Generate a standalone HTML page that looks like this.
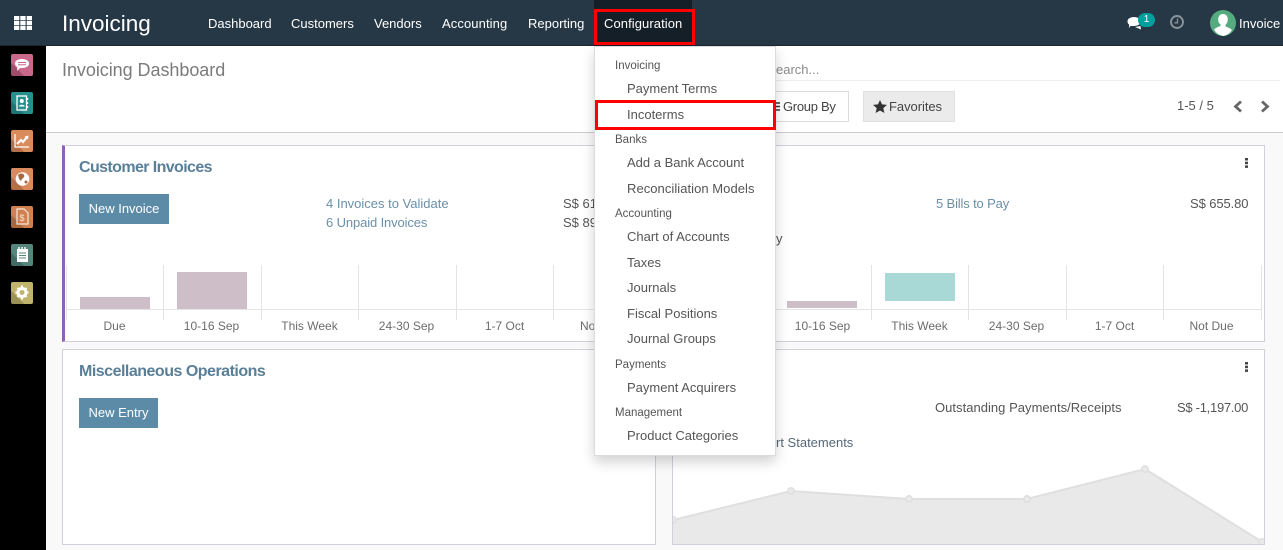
<!DOCTYPE html>
<html><head><meta charset="utf-8">
<style>
html,body{margin:0;padding:0}
body{width:1283px;height:550px;overflow:hidden;position:relative;background:#f9f9f9;font-family:"Liberation Sans",sans-serif;font-size:13px;color:#4c4c4c}
div,span.t{position:absolute;white-space:nowrap;box-sizing:border-box}
.t{line-height:16px}
.nav{color:#fff;top:16px;font-size:13px}
.card{background:#fff;border:1px solid #d1d1dc}
.hd{left:615px;font-size:11.5px;color:#555}
.it{left:627px;font-size:13px;color:#555}
.ax{top:318px;font-size:12px;color:#6c6c6c;text-align:center;width:97px}
.l{background:#e4e4e6}
.ic{left:11px;width:22px;height:22px;border-radius:2px}
a{color:inherit}
</style></head><body>

<!-- top bar -->
<div style="left:0;top:0;width:1283px;height:46px;background:#263846;border-bottom:1px solid #1a2730"></div>
<svg style="position:absolute;left:14px;top:16px" width="18" height="14"><g fill="#fff"><rect x="0" y="0" width="5.300" height="4.200"/><rect x="6.300" y="0" width="5.300" height="4.200"/><rect x="12.700" y="0" width="5.300" height="4.200"/><rect x="0" y="4.900" width="5.300" height="4.200"/><rect x="6.300" y="4.900" width="5.300" height="4.200"/><rect x="12.700" y="4.900" width="5.300" height="4.200"/><rect x="0" y="9.800" width="5.300" height="4.200"/><rect x="6.300" y="9.800" width="5.300" height="4.200"/><rect x="12.700" y="9.800" width="5.300" height="4.200"/></g></svg>
<div class="t" style="left:62px;top:10px;font-size:22.500px;line-height:28px;color:#fff">Invoicing</div>
<div class="t nav" style="left:208px">Dashboard</div>
<div class="t nav" style="left:291px">Customers</div>
<div class="t nav" style="left:374px">Vendors</div>
<div class="t nav" style="left:442px;letter-spacing:.1px">Accounting</div>
<div class="t nav" style="left:528px">Reporting</div>
<div style="left:594px;top:0;width:98px;height:46px;background:#151f27"></div>
<div class="t nav" style="left:604px;letter-spacing:.08px">Configuration</div>
<div style="left:594px;top:9px;width:101px;height:36px;border:3px solid #f00"></div>

<svg style="position:absolute;left:1127px;top:16px" width="16" height="14"><path d="M0.500 5.500C0.500 2.800 3.200 1 7 1s6.500 1.800 6.500 4.500S10.800 10 7 10L3.500 10 1.800 12 2.300 8.900C1.200 8 .5 6.900 .5 5.500z" fill="#fff"/><path d="M8 11l6 2.500-.5-3.500z" fill="#fff"/></svg>
<div style="left:1138px;top:13px;width:17px;height:14px;border-radius:8px;background:#00a09d;color:#fff;font-size:10px;line-height:13px;text-align:center">1</div>
<svg style="position:absolute;left:1170px;top:15px" width="14" height="14"><circle cx="7" cy="7" r="6" fill="none" stroke="#8b949b" stroke-width="1.900"/><path d="M7.500 3.500V7.800H4.500" fill="none" stroke="#8b949b" stroke-width="1.300"/></svg>
<svg style="position:absolute;left:1210px;top:10px" width="26" height="26"><circle cx="13" cy="13" r="13" fill="#55ab7f"/><path d="M13 4c3 0 4.800 2.300 4.800 5.500 0 2.300-1 4.300-2.300 5.300v1.700c2.500 1 5 1.800 6.500 3.500A13 13 0 0 1 13 26a13 13 0 0 1-9-6.500c1.500-1.700 4-2.500 6.500-3.500v-1.700C9.200 13.800 8.200 11.800 8.200 9.500 8.200 6.300 10 4 13 4z" fill="#fff"/></svg>
<div class="t" style="left:1239px;top:16px;color:#fff;font-size:13px">Invoice</div>

<!-- sidebar -->
<div style="left:0;top:46px;width:46px;height:504px;background:#000"></div>
<div class="ic" style="top:54px;background:linear-gradient(45deg,#a14c6a 0,#a14c6a 30%,#c9688a 30%)"></div>
<svg style="position:absolute;left:14px;top:58px" width="16" height="14"><path d="M1 5.500C1 2.800 4 1 8 1s7 1.800 7 4.500S12 10 8 10H6L3 13l.5-3.800C2 8.400 1 7 1 5.500z" fill="#fff"/><path d="M4 4.500h8M4 6.800h8" stroke="#c9688a"/></svg>
<div class="ic" style="top:92px;background:linear-gradient(45deg,#1d7574 0,#1d7574 30%,#26908f 30%)"></div>
<svg style="position:absolute;left:16px;top:95px" width="13" height="16"><rect x="1" y="1" width="9.500" height="14" fill="none" stroke="#fff" stroke-width="1.300"/><path d="M11.500 3v2M11.500 7v2M11.500 11v2" stroke="#fff" stroke-width="1.300"/><circle cx="5.800" cy="6" r="2" fill="#fff"/><path d="M3 11.500c0-2.300 5.600-2.300 5.600 0z" fill="#fff"/></svg>
<div class="ic" style="top:130px;background:linear-gradient(45deg,#b56f44 0,#b56f44 30%,#d98b5c 30%)"></div>
<svg style="position:absolute;left:14px;top:133px" width="16" height="16"><path d="M1 1v13h14" fill="none" stroke="#fff" stroke-width="1.200"/><path d="M3 11l4-4 2 2 4-5" fill="none" stroke="#fff" stroke-width="2.200"/><path d="M10.500 3.500L14.500 2.500 14 6.500z" fill="#fff"/></svg>
<div class="ic" style="top:168px;background:linear-gradient(45deg,#b56f44 0,#b56f44 30%,#d98b5c 30%)"></div>
<svg style="position:absolute;left:15px;top:171px" width="15" height="16"><circle cx="7.500" cy="8" r="6.800" fill="#fff"/><path d="M3 4c2-2 5-2 6 0s-1 3-2 4l-1 2-2-2z" fill="#a9683f"/><circle cx="11" cy="11" r="1.500" fill="#a9683f"/></svg>
<div class="ic" style="top:206px;background:linear-gradient(45deg,#aa673c 0,#aa673c 30%,#d0804f 30%)"></div>
<svg style="position:absolute;left:16px;top:208px" width="13" height="17"><path d="M1 1h7l4 4v11H1z" fill="none" stroke="#f3e6dc" stroke-width="1.200"/><text x="3.500" y="13" font-size="9" fill="#f3e6dc" font-family="Liberation Sans">$</text></svg>
<div class="ic" style="top:244px;background:linear-gradient(45deg,#426c63 0,#426c63 30%,#54867b 30%)"></div>
<svg style="position:absolute;left:16px;top:246px" width="13" height="17"><path d="M1 3h11v13H1z" fill="#fff"/><path d="M3 1v3M6 1v3M9 1v3" stroke="#fff" stroke-width="1.400"/><path d="M3 7h7M3 9.500h7M3 12h7" stroke="#54867b"/></svg>
<div class="ic" style="top:282px;background:linear-gradient(45deg,#9c9155 0,#9c9155 30%,#c0b46c 30%)"></div>
<svg style="position:absolute;left:15px;top:285px" width="14" height="15"><circle cx="7" cy="7.500" r="4" fill="none" stroke="#fff" stroke-width="3"/><path d="M7 .5v3M7 11.500v3M.5 7.500h3M10.500 7.500h3M2.400 2.900l2 2M9.600 10.100l2 2M11.600 2.900l-2 2M4.400 10.100l-2 2" stroke="#fff" stroke-width="2"/></svg>

<!-- control panel -->
<div style="left:46px;top:46px;width:1237px;height:87px;background:#fff;border-bottom:1px solid #ccc"></div>
<div class="t" style="left:62px;top:59px;font-size:18px;line-height:22px;color:#7c7b7b;letter-spacing:-.05px">Invoicing Dashboard</div>
<div style="left:770px;top:80px;width:510px;height:1px;background:#ececec"></div>
<div class="t" style="left:776px;top:62px;font-size:13px;color:#8a8a8a">earch...</div>
<div style="left:740px;top:91px;width:109px;height:31px;background:#fff;border:1px solid #dcdcdc"></div>
<svg style="position:absolute;left:774px;top:102px" width="6" height="9"><path d="M0 1h6M0 4.500h6M0 8h6" stroke="#333" stroke-width="1.500"/></svg>
<div class="t" style="left:783px;top:99px;font-size:13px;color:#444;letter-spacing:-.3px">Group By</div>
<div style="left:863px;top:91px;width:92px;height:31px;background:#ebebeb;border:1px solid #e0e0e0"></div>
<svg style="position:absolute;left:873px;top:100px" width="14" height="13"><path d="M7 0l2 4.400 5 .5-3.700 3.200 1.100 4.900L7 10.500 2.600 13l1.100-4.900L0 4.900l5-.5z" fill="#333"/></svg>
<div class="t" style="left:889px;top:99px;font-size:13px;color:#444;letter-spacing:-.05px">Favorites</div>
<div class="t" style="left:1177px;top:98px;font-size:13px;color:#555">1-5 / 5</div>
<svg style="position:absolute;left:1232px;top:100px" width="40" height="13"><path d="M9 1.500L3.500 6.500 9 11.500" fill="none" stroke="#666" stroke-width="2.800"/><path d="M30 1.500L35.500 6.500 30 11.500" fill="none" stroke="#666" stroke-width="2.800"/></svg>

<!-- card: customer invoices -->
<div class="card" style="left:62px;top:145px;width:594px;height:197px;border-left:3px solid #8f62b8"></div>
<div class="t" style="left:79px;top:158px;font-size:16px;line-height:20px;font-weight:bold;color:#5a7f97;letter-spacing:-.6px">Customer Invoices</div>
<div style="left:79px;top:194px;width:90px;height:30px;background:#5c8ba8;color:#fff;font-size:13px;line-height:29px;text-align:center">New Invoice</div>
<div class="t" style="left:326px;top:196px;color:#6a8fa8">4 Invoices to Validate</div>
<div class="t" style="left:326px;top:215px;color:#6a8fa8;letter-spacing:-.12px">6 Unpaid Invoices</div>
<div class="t" style="left:563px;top:196px;color:#555">S$ 61</div>
<div class="t" style="left:563px;top:215px;color:#555">S$ 89</div>
<div class="l" style="left:66px;top:309px;width:530px;height:1px"></div>
<div class="l" style="left:66px;top:265px;width:1px;height:55px"></div>
<div class="l" style="left:163px;top:265px;width:1px;height:55px"></div>
<div class="l" style="left:261px;top:265px;width:1px;height:55px"></div>
<div class="l" style="left:358px;top:265px;width:1px;height:55px"></div>
<div class="l" style="left:456px;top:265px;width:1px;height:55px"></div>
<div class="l" style="left:553px;top:265px;width:1px;height:55px"></div>
<div style="left:80px;top:297px;width:70px;height:12px;background:#cdbec8"></div>
<div style="left:177px;top:272px;width:70px;height:37px;background:#cdbec8"></div>
<div class="t ax" style="left:66px">Due</div>
<div class="t ax" style="left:163px">10-16 Sep</div>
<div class="t ax" style="left:261px">This Week</div>
<div class="t ax" style="left:358px">24-30 Sep</div>
<div class="t ax" style="left:456px">1-7 Oct</div>
<div class="t" style="left:580px;top:318px;font-size:12px;color:#6c6c6c">No</div>

<!-- card: vendor bills -->
<div class="card" style="left:672px;top:145px;width:593px;height:197px"></div>
<svg style="position:absolute;left:1245px;top:158px" width="3" height="10"><rect width="3" height="2.500" y="0" fill="#444"/><rect width="3" height="2.500" y="3.700" fill="#444"/><rect width="3" height="2.500" y="7.400" fill="#444"/></svg>
<div class="t" style="left:936px;top:196px;color:#6a8fa8;letter-spacing:-.15px">5 Bills to Pay</div>
<div class="t" style="left:1190px;top:196px;color:#555;letter-spacing:-.1px">S$ 655.80</div>
<div class="t" style="left:776px;top:231px;color:#555">y</div>
<div class="l" style="left:676px;top:309px;width:585px;height:1px"></div>
<div class="l" style="left:871px;top:265px;width:1px;height:55px"></div>
<div class="l" style="left:968px;top:265px;width:1px;height:55px"></div>
<div class="l" style="left:1066px;top:265px;width:1px;height:55px"></div>
<div class="l" style="left:1163px;top:265px;width:1px;height:55px"></div>
<div class="l" style="left:1261px;top:265px;width:1px;height:55px"></div>
<div style="left:787px;top:301px;width:70px;height:7px;background:#cdbec8"></div>
<div style="left:885px;top:273px;width:70px;height:28px;background:#a8d9d6"></div>
<div class="t ax" style="left:774px">10-16 Sep</div>
<div class="t ax" style="left:871px">This Week</div>
<div class="t ax" style="left:968px">24-30 Sep</div>
<div class="t ax" style="left:1066px">1-7 Oct</div>
<div class="t ax" style="left:1163px">Not Due</div>

<!-- card: misc -->
<div class="card" style="left:62px;top:349px;width:594px;height:196px"></div>
<div class="t" style="left:79px;top:362px;font-size:16px;line-height:20px;font-weight:bold;color:#5a7f97;letter-spacing:-.5px">Miscellaneous Operations</div>
<div style="left:79px;top:398px;width:79px;height:30px;background:#5c8ba8;color:#fff;font-size:13px;line-height:29px;text-align:center">New Entry</div>

<!-- card: bank -->
<div class="card" style="left:672px;top:349px;width:593px;height:196px;overflow:hidden">
<svg style="position:absolute;left:-1px;top:-1px" width="593" height="196"><path d="M1 171L119 142 237 150 355 150 473 120 592 194V195H1z" fill="#e9e9e9"/><path d="M1 171L119 142 237 150 355 150 473 120 592 194" fill="none" stroke="#dfdfdf" stroke-width="2"/><g fill="#e9e9e9" stroke="#dfdfdf" stroke-width="1.500"><circle cx="1" cy="171" r="3.200"/><circle cx="119" cy="142" r="3.200"/><circle cx="237" cy="150" r="3.200"/><circle cx="355" cy="150" r="3.200"/><circle cx="473" cy="120" r="3.200"/><circle cx="590" cy="193" r="3.200"/></g></svg>
</div>
<svg style="position:absolute;left:1245px;top:362px" width="3" height="10"><rect width="3" height="2.500" y="0" fill="#444"/><rect width="3" height="2.500" y="3.700" fill="#444"/><rect width="3" height="2.500" y="7.400" fill="#444"/></svg>
<div class="t" style="left:935px;top:400px;color:#555;letter-spacing:.03px">Outstanding Payments/Receipts</div>
<div class="t" style="left:1177px;top:400px;color:#555;letter-spacing:-.28px">S$ -1,197.00</div>
<div class="t" style="left:776px;top:435px;color:#56687a">rt Statements</div>

<!-- dropdown -->
<div style="left:594px;top:46px;width:182px;height:410px;background:#fff;border:1px solid #dcdce0;box-shadow:0 6px 12px rgba(0,0,0,.18)"></div>
<div class="t hd" style="top:58px">Invoicing</div>
<div class="t it" style="top:81px">Payment Terms</div>
<div class="t it" style="top:107px">Incoterms</div>
<div class="t hd" style="top:132px">Banks</div>
<div class="t it" style="top:155px">Add a Bank Account</div>
<div class="t it" style="top:181px;letter-spacing:.05px">Reconciliation Models</div>
<div class="t hd" style="top:206px">Accounting</div>
<div class="t it" style="top:229px">Chart of Accounts</div>
<div class="t it" style="top:255px">Taxes</div>
<div class="t it" style="top:280px">Journals</div>
<div class="t it" style="top:306px">Fiscal Positions</div>
<div class="t it" style="top:331px">Journal Groups</div>
<div class="t hd" style="top:357px">Payments</div>
<div class="t it" style="top:380px">Payment Acquirers</div>
<div class="t hd" style="top:405px">Management</div>
<div class="t it" style="top:428px">Product Categories</div>
<div style="left:595px;top:100px;width:181px;height:30px;border:3px solid #f00"></div>

</body></html>
